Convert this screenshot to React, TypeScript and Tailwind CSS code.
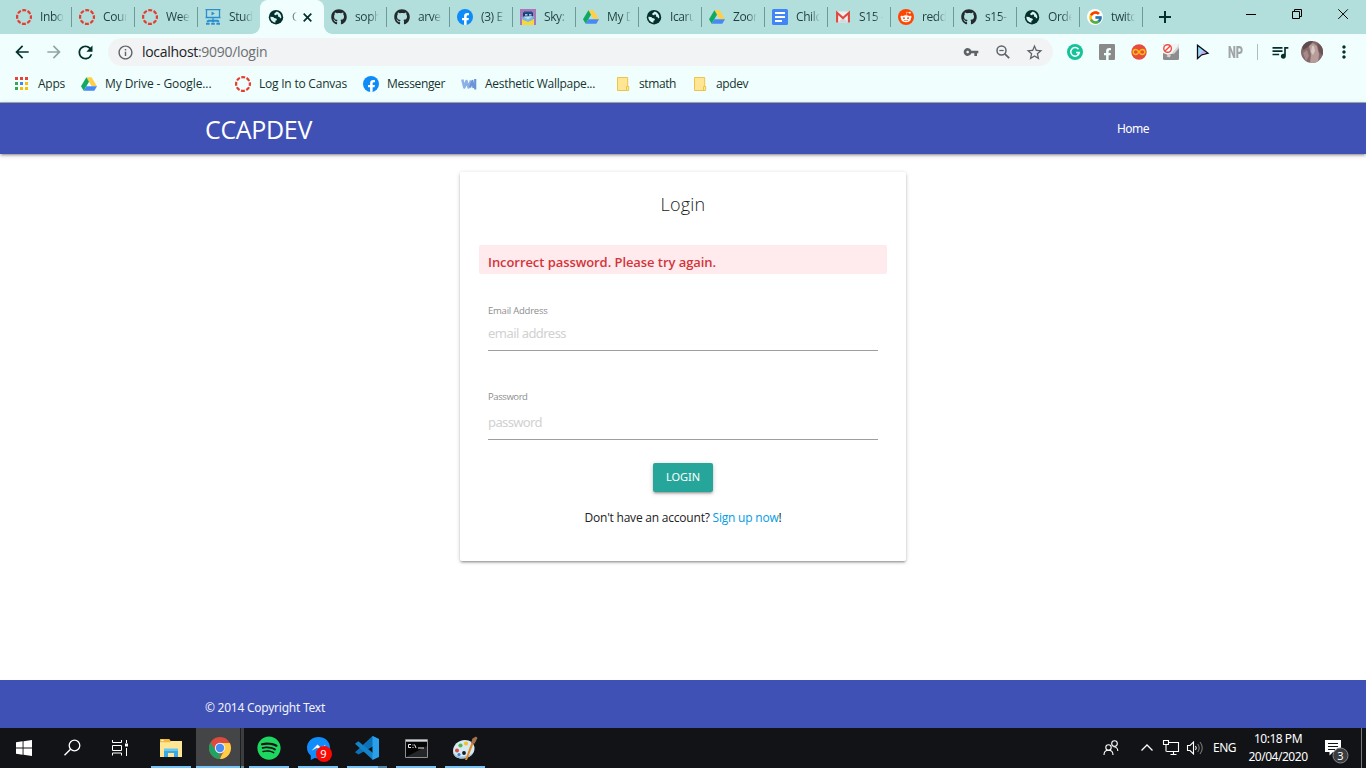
import React from "react";
import { FaGithub, FaRedditAlien, FaFacebookF, FaSpotify } from "react-icons/fa";
import { FcGoogle } from "react-icons/fc";
import {
  MdArrowBack, MdArrowForward, MdRefresh, MdInfoOutline, MdVpnKey,
  MdStarBorder, MdQueueMusic, MdMoreVert,
} from "react-icons/md";

function CanvasIcon() {
  return (
    <svg width="16" height="16" viewBox="0 0 16 16" className="shrink-0">
      <circle cx="8" cy="8" r="6.9" fill="none" stroke="#e63b2e" strokeWidth="2.2" strokeDasharray="3.9 1.52" strokeDashoffset="1.95" />
    </svg>
  );
}

function DriveIcon() {
  return (
    <svg width="16" height="16" viewBox="0 0 16 16" className="shrink-0">
      <path d="M5.4 1.2h5.2L16 10.3h-5.3z" fill="#ffcf48" />
      <path d="M5.4 1.2 8 5.7 2.7 14.7 0 10.3z" fill="#11a861" />
      <path d="M5.4 10.3H16l-2.7 4.4H2.7z" fill="#4688f4" />
    </svg>
  );
}

function FacebookIcon() {
  return (
    <span className="flex h-4 w-4 shrink-0 items-end justify-center overflow-hidden rounded-full bg-[#0f8bf8]">
      <FaFacebookF size={13} color="#fff" className="-mb-px" />
    </span>
  );
}

function GlobeIcon() {
  return (
    <svg width="16" height="16" viewBox="0 0 16 16" className="shrink-0">
      <circle cx="8" cy="8.200" r="7.200" fill="#03302d" />
      <path d="M8.800 2.600 6.300 4.600l.2 1.500 1.700.2.600-1 1.300.6-.2 1.700 1.700.3.400 1.700 1.400-.8c0-2.700-1.500-5.200-4.600-6.200z" fill="#d9f3f1" />
      <path d="M2.300 7.700c0 3 2 5.500 5 6l.2-1.900 1.500-.9-.7-1.500-2.100-.3-.9-1.200z" fill="#d9f3f1" />
    </svg>
  );
}

function StudIcon() {
  return (
    <svg width="16" height="16" viewBox="0 0 16 16" fill="none" stroke="#2a8fd0" className="shrink-0">
      <path d="M1.500 0v8.500M14.500 0v8.500M.5.7h15M.5 8.500h15M8 8.500v3" strokeWidth="1.300" />
      <path d="M6.500 2.500v4l3.400-2z" fill="#2a8fd0" stroke="none" />
      <path d="M3 11.700h10M1 14.700h3.600M6.200 14.700h3.600M11.400 14.700H15" strokeWidth="2" />
      <path d="M1.800 12.300h2M7 12.300h2M12.200 12.300h2" strokeWidth="2" />
    </svg>
  );
}

function SkyIcon() {
  return (
    <svg width="16" height="16" viewBox="0 0 16 16" className="shrink-0">
      <path fill="#a878ba" d="M0 0h16v16H0z" />
      <path fill="#f9d835" d="M2 10h12v6H2z" />
      <path fill="#123f78" d="M3 3.500h10V8H3z" />
      <path fill="#1f4f88" d="M4 2.500h8v2H4z" />
      <path fill="#dcecf5" d="M5 5.200h2.500v1.200H5zM9 5.200h2.500v1.200H9z" />
      <path fill="#7db9df" d="m1 8 7 1 6-2-1 4-5 2-5-2z" />
      <path fill="#b5dcef" d="m3 7.500 5 3 5-3.500z" />
    </svg>
  );
}

function DocsIcon() {
  return (
    <svg width="16" height="16" viewBox="0 0 16 16" className="shrink-0">
      <rect width="16" height="16" rx="1.500" fill="#4285f4" />
      <path d="M3 4h10M3 8h10M3 12h7" stroke="#fff" strokeWidth="1.900" />
    </svg>
  );
}

function GmailIcon() {
  return (
    <svg width="16" height="16" viewBox="0 0 16 16" className="shrink-0">
      <path fill="#eee" d="M1 2.500h14v11H1z" />
      <path fill="#d8d8d8" d="m3 13.500 5-5 5 5z" />
      <path d="M2.100 13.500V3.800L8 9l5.900-5.200v9.700" fill="none" stroke="#dd4b3e" strokeWidth="2.100" />
    </svg>
  );
}

function RedditIcon() {
  return (
    <span className="flex h-4 w-4 shrink-0 items-center justify-center rounded-full bg-[#ff4500]">
      <FaRedditAlien size={12} color="#fff" />
    </span>
  );
}

function GoogleIcon() {
  return (
    <span className="flex h-4 w-4 shrink-0 items-center justify-center rounded-full bg-white">
      <FcGoogle size={15} />
    </span>
  );
}

function FolderIcon() {
  return (
    <svg width="16" height="16" viewBox="0 0 16 16" className="shrink-0">
      <path d="M2.500 1.500h10.200v9h1v4H2.500z" fill="#ffe694" stroke="#ecc448" />
      <path d="M11.500 14.500v-4h2" fill="none" stroke="#ecc448" />
    </svg>
  );
}

function AppsIcon() {
  const colors = ["#ea4335", "#ea4335", "#ea4335", "#34a853", "#4285f4", "#fbbc05", "#34a853", "#fbbc05", "#fbbc05"];
  return (
    <svg width="14" height="14" viewBox="0 0 14 14" className="shrink-0" shapeRendering="crispEdges">
      {colors.map((c, i) => (
        <rect key={i} x={(i % 3) * 5} y={Math.floor(i / 3) * 5} width="3" height="3" fill={c} />
      ))}
    </svg>
  );
}

function WallpaperIcon() {
  return (
    <svg width="16" height="16" viewBox="0 0 16 16" className="shrink-0" fill="none" strokeWidth="2.500" strokeLinejoin="round">
      <path d="m1.300 3.500 2 8L5.500 5l2 6.500L10 4.500" stroke="#8db0e6" />
      <path d="m9 11.500 2.500-6.500 1 7M14.200 3v10.500" stroke="#6b93d8" strokeWidth="2.200" />
    </svg>
  );
}

const github = <FaGithub size={16} color="#24292e" className="shrink-0" />;

const tabsBefore = [
  { icon: <CanvasIcon />, text: "Inbo" },
  { icon: <CanvasIcon />, text: "Cour" },
  { icon: <CanvasIcon />, text: "Wee" },
  { icon: <StudIcon />, text: "Stud" },
];

const tabsAfter = [
  { icon: github, text: "soph" },
  { icon: github, text: "arve" },
  { icon: <FacebookIcon />, text: "(3) E" },
  { icon: <SkyIcon />, text: "Sky:" },
  { icon: <DriveIcon />, text: "My D" },
  { icon: <GlobeIcon />, text: "Icaru" },
  { icon: <DriveIcon />, text: "Zoor" },
  { icon: <DocsIcon />, text: "Chilc" },
  { icon: <GmailIcon />, text: "S15 -" },
  { icon: <RedditIcon />, text: "redd" },
  { icon: github, text: "s15-" },
  { icon: <GlobeIcon />, text: "Orde" },
  { icon: <GoogleIcon />, text: "twitc" },
];

function Tab({ icon, text, line = true }: { icon: React.ReactNode; text: string; line?: boolean }) {
  return (
    <div className="flex h-[34px] w-[63px] shrink-0 items-center">
      <div className="flex w-[62px] items-center pl-[7px]">
        <span className="flex w-4 shrink-0">{icon}</span>
        <span className="ml-2 w-[24px] overflow-hidden whitespace-nowrap text-[12px] leading-[18px] tracking-[-0.4px] text-[#1f3f3d] [mask-image:linear-gradient(to_right,black_60%,transparent)]">
          {text}
        </span>
      </div>
      <div className={line ? "h-5 w-px bg-[#6d9a97]" : "h-5 w-px"} />
    </div>
  );
}

function TabStrip() {
  return (
    <div className="flex h-[34px] bg-[#b2dfdc]">
      <div className="flex w-[252px] pl-[9px]">
        {tabsBefore.map((t, i) => (
          <Tab key={i} {...t} line={i < 3} />
        ))}
      </div>
      <div className="flex w-[80px] shrink-0">
        <div className="h-2 w-2 self-end bg-[radial-gradient(circle_at_0_0,#b2dfdc_7.500px,#f0fffe_8px)]" />
        <div className="flex w-[64px] items-center rounded-t-lg bg-[#f0fffe] pl-2">
          <span className="flex w-4 shrink-0"><GlobeIcon /></span>
          <span className="ml-2 w-[5px] overflow-hidden text-[12px] text-[#2b4a48] [mask-image:linear-gradient(to_right,black,transparent)]">C</span>
          <svg width="9" height="9" viewBox="0 0 9 9" className="ml-[6px]" stroke="#03302d" strokeWidth="1.700">
            <path d="m.7.7 7.600 7.600M8.300.7.7 8.300" />
          </svg>
        </div>
        <div className="h-2 w-2 self-end bg-[radial-gradient(circle_at_100%_0,#b2dfdc_7.500px,#f0fffe_8px)]" />
      </div>
      <div className="-ml-2 flex">
        {tabsAfter.map((t, i) => (
          <Tab key={i} {...t} />
        ))}
      </div>
      <svg width="12" height="12" viewBox="0 0 12 12" className="mt-[11px] ml-4" stroke="#03302d" strokeWidth="2">
        <path d="M6 0v12M0 6h12" />
      </svg>
      <svg width="126" height="34" viewBox="0 0 126 34" fill="none" stroke="#000" className="ml-auto shrink-0">
        <path d="M6 14.500h10M52.500 11.500h7v7h-7zM54.500 11.500v-2h7v7h-2" />
        <path d="m98.300 9.300 9.600 9.600M107.900 9.300l-9.600 9.600" />
      </svg>
    </div>
  );
}

function Extensions() {
  return (
    <div className="flex items-center">
      <svg width="16" height="16" viewBox="0 0 16 16">
        <circle cx="8" cy="8" r="8" fill="#15c39a" />
        <path d="M11.500 5.300A4.300 4.300 0 1 0 12.300 8.600H9" fill="none" stroke="#fff" strokeWidth="1.500" />
        <path d="M11.200 7.900v3.400" stroke="#fff" strokeWidth="1.400" />
      </svg>
      <span className="ml-4 flex h-4 w-4 items-end justify-end overflow-hidden rounded-[1px] bg-[#8a8a8a] pr-px">
        <FaFacebookF size={13} color="#f0fffe" className="-mb-px" />
      </span>
      <svg width="16" height="16" viewBox="0 0 16 16" className="ml-4">
        <circle cx="8" cy="8" r="7.700" fill="#e94b3c" />
        <path d="M8 8C6.500 5.900 5.600 5.500 4.700 5.500a2.500 2.500 0 0 0 0 5C5.600 10.500 6.500 10.100 8 8s2.400-2.500 3.300-2.500a2.500 2.500 0 0 1 0 5C10.400 10.500 9.500 10.100 8 8z" fill="none" stroke="#fbbf14" strokeWidth="1.500" />
      </svg>
      <svg width="16" height="16" viewBox="0 0 16 16" className="ml-4">
        <rect width="16" height="16" rx="1.500" fill="#8d8d8d" />
        <path d="M0 1.500V9l5 2 5-1.500 6-6.500V1L15 0H1z" fill="#f3f3f3" />
        <path d="m3.500 12.500 2-2.500 2.500 1.500-1.500 2zM9 9l7-8v3l-5 6z" fill="#d5d5d5" />
        <circle cx="4.600" cy="4.500" r="3.800" fill="#fff" stroke="#ee4b42" strokeWidth="1.400" />
        <path d="m2 7 5.200-5" stroke="#ee4b42" strokeWidth="1.400" />
      </svg>
      <svg width="16" height="16" viewBox="0 0 16 16" className="ml-4">
        <path d="M2.500 1.200v13.300l4.200-3.700 6.300-1.600z" fill="#9adcf5" stroke="#0d0d18" strokeWidth="1.300" />
        <path d="m3.300 13 3-2.800 4.700-1.300-3.200-2z" fill="#d39cf0" />
      </svg>
      <span className="ml-[15px] flex w-[18px] justify-center font-['Roboto'] text-[17px] leading-4 font-black text-[#a0a5a5]">
        <span className="scale-x-[0.66]">NP</span>
      </span>
      <span className="ml-[13px] h-4 w-px bg-[#a9c0bf]" />
      <MdQueueMusic size={20} color="#03302d" className="ml-3" />
      <svg width="22" height="22" viewBox="0 0 22 22" className="ml-[11px]">
        <clipPath id="avatar"><circle cx="11" cy="11" r="11" /></clipPath>
        <g clipPath="url(#avatar)">
          <path fill="#85696b" d="M0 0h22v22H0z" />
          <path fill="#5f4a4d" d="M0 0h12L7 6 2 9z" />
          <path fill="#b89c99" d="m8 5 4-3 4 3 2 8-1 9H9l1-8z" />
          <path fill="#d8c8c3" d="m11 5 2 0 1 5-2 4-2-3z" />
          <path fill="#a58a89" d="m2 12 4-3 2 6-3 5z" />
          <path fill="#6d5256" d="m16 2 6 4v9l-4-4z" />
        </g>
      </svg>
      <MdMoreVert size={20} color="#03302d" className="ml-[11px]" />
    </div>
  );
}

function Toolbar() {
  return (
    <div className="flex h-9 items-center bg-[#f0fffe]">
      <MdArrowBack size={20} color="#03302d" className="ml-3" />
      <MdArrowForward size={20} color="#8fa6a5" className="ml-3" />
      <MdRefresh size={21} color="#03302d" className="ml-[11px]" />
      <div className="ml-3 flex h-7 w-[945px] items-center rounded-full bg-[#f1f3f4]">
        <MdInfoOutline size={17} color="#5f6368" className="ml-[9px]" />
        <span className="ml-2 text-[14px] leading-5 tracking-[-0.3px] text-[#6b6f73]">
          <span className="text-[#202124]">localhost</span>:9090/login
        </span>
        <MdVpnKey size={16} color="#5f6368" className="ml-auto" />
        <svg width="16" height="16" viewBox="0 0 16 16" className="ml-4" fill="none" stroke="#5f6368">
          <circle cx="6.500" cy="6.500" r="4.500" strokeWidth="1.500" />
          <path d="m9.800 9.800 4.400 4.400" strokeWidth="1.800" />
          <path d="M4.300 6.500h4.400" strokeWidth="1.200" />
        </svg>
        <MdStarBorder size={19} color="#5f6368" className="mr-[9px] ml-[14px]" />
      </div>
      <div className="ml-[14px]"><Extensions /></div>
    </div>
  );
}

function BookmarksBar() {
  return (
    <div className="flex h-[33px] items-center border-b border-[#a5aeae] bg-[#f0fffe] pb-1 pl-[15px] text-[12px] leading-4 whitespace-nowrap text-[#173331]">
      <div className="flex w-[66px] items-center gap-[9px] tracking-[-0.25px]"><AppsIcon />Apps</div>
      <div className="flex w-[154px] items-center gap-2 tracking-[-0.09px]"><DriveIcon />My Drive - Google...</div>
      <div className="flex w-[128px] items-center gap-2 tracking-[-0.22px]"><CanvasIcon />Log In to Canvas</div>
      <div className="flex w-[98px] items-center gap-2 tracking-[-0.36px]"><FacebookIcon />Messenger</div>
      <div className="flex w-[154px] items-center gap-2 tracking-[-0.28px]"><WallpaperIcon />Aesthetic Wallpape...</div>
      <div className="flex w-[77px] items-center gap-2 tracking-[-0.4px]"><FolderIcon />stmath</div>
      <div className="flex items-center gap-2 tracking-[-0.4px]"><FolderIcon />apdev</div>
    </div>
  );
}

function LoginCard() {
  return (
    <form className="flex h-[389px] w-[446px] flex-col rounded-[2px] bg-white px-[19px] pt-[20px] shadow-[0_2px_2px_0_rgba(0,0,0,0.14),0_3px_1px_-2px_rgba(0,0,0,0.12),0_1px_4px_0_rgba(0,0,0,0.2)]">
      <h1 className="text-center text-[18px] leading-6 font-light tracking-[0.2px] text-[#222]">Login</h1>
      <div className="mt-[29px] h-[29px] rounded-[2px] bg-[#ffebee] px-[9px] pt-[7px] text-[13px] leading-5 font-semibold tracking-[-0.066px] text-[#d3343a]">
        Incorrect password. Please try again.
      </div>
      <div className="flex flex-col px-[9px]">
        <label htmlFor="email" className="mt-[30px] text-[9.5px] leading-[14px] tracking-[-0.233px] text-[#8e8e8e]">Email Address</label>
        <input id="email" placeholder="email address" className="h-[33px] border-b border-[#9e9e9e] pb-[2px] font-['Noto_Sans',sans-serif] text-[13px] tracking-[-0.54px] outline-none placeholder:text-[#d1d1d1]" />
        <label htmlFor="password" className="mt-[39px] text-[9.5px] leading-[14px] tracking-[-0.416px] text-[#8e8e8e]">Password</label>
        <input id="password" placeholder="password" className="h-9 border-b border-[#9e9e9e] font-['Noto_Sans',sans-serif] text-[13px] tracking-[-0.62px] outline-none placeholder:text-[#d1d1d1]" />
      </div>
      <button type="button" className="mt-[23px] h-[29px] w-[60px] self-center rounded-[2px] bg-[#26a69a] font-['Noto_Sans',sans-serif] text-[11px] tracking-[-0.04px] text-white shadow-[0_2px_2px_0_rgba(0,0,0,0.14),0_3px_1px_-2px_rgba(0,0,0,0.12),0_1px_5px_0_rgba(0,0,0,0.2)]">
        LOGIN
      </button>
      <p className="mt-4 text-center text-[12px] leading-5 tracking-[-0.214px] text-[#212121]">
        Don't have an account? <a className="text-[#039be5]">Sign up now</a>!
      </p>
    </form>
  );
}

function Slot({ children }: { children: React.ReactNode }) {
  return (
    <div className="flex h-10 w-10 flex-col items-center">
      <div className="flex h-[38px] items-center justify-center pt-[2px]">{children}</div>
      <div className="h-[2px] w-full bg-[#76c3f7]" />
    </div>
  );
}

function MessengerIcon() {
  return (
    <div className="relative">
      <svg width="25" height="25" viewBox="0 0 25 25">
        <path d="M12.500 1C6 1 1 5.600 1 11.800c0 3.400 1.500 6 3.800 7.900V24l3.900-2.100c1.200.3 2.500.5 3.800.5 6.500 0 11.500-4.500 11.500-10.600S19 1 12.500 1z" fill="#118cfb" />
        <path d="m5.500 14.800 6-6.400 3.200 3.100 5.500-3.100-6.100 6.400-3.100-3.100z" fill="#fff" />
      </svg>
      <span className="absolute top-[10px] left-[10px] flex h-4 w-4 items-center justify-center rounded-full bg-[#fa0a05] text-[11px] leading-4 text-white">9</span>
    </div>
  );
}

function Taskbar() {
  return (
    <div className="flex h-10 bg-[#111316] font-['Noto_Sans',sans-serif] text-white">
      <svg width="144" height="40" viewBox="0 0 144 40" fill="none" stroke="#fff" className="shrink-0">
        <path d="M16 14.300 22.600 13.300v6.300H16zM23.500 13.200 32 12v7.600h-8.500zM16 20.500h6.600v6.300L16 25.800zM23.500 20.500H32V28l-8.500-1.200z" fill="#fff" stroke="none" />
        <circle cx="74.500" cy="17.500" r="5.300" strokeWidth="1.300" />
        <path d="m70.500 21.300-6 6" strokeWidth="1.400" />
        <path d="M112.500 12v2.500h9V12M112.500 27.500V25h9v2.500M112.500 17.500h9v5h-9zM126.500 12v3M126.500 20v8" />
        <path d="M125 15.500h3v3h-3z" fill="#fff" stroke="none" />
      </svg>
      <div className="flex gap-[9px] pl-[7px]">
        <Slot>
          <svg width="22" height="20" viewBox="0 0 22 20">
            <path d="M0 2.200Q0 1 1 1h8l1.500 2H22v16H0z" fill="#ffe694" />
            <path d="M0 2.200Q0 1 1 1h8l1.500 2v1.200H0z" fill="#f0bb3c" />
            <path d="M1.500 1.800h2v1.200h-2z" fill="#fff" />
            <path d="M4 19v-8h14v8h-4v-4H8v4z" fill="#39a9e5" />
            <path d="M4 10.500h14V13H4z" fill="#62c8f1" />
          </svg>
        </Slot>
        <div className="-mx-1 flex h-10 w-12">
          <div className="flex h-10 w-11 flex-col bg-[#434547]">
            <div className="flex h-[38px] items-center justify-center pt-[2px] pl-[3px]">
              <svg width="22" height="22" viewBox="0 0 22 22">
                <circle cx="11" cy="11" r="11" fill="#dd4b3e" />
                <path d="M1.500 5.500 6.500 13.500 11 16 8.300 21.700A11 11 0 0 1 1.500 5.500z" fill="#1da362" />
                <path d="M11 6h9.800A11 11 0 0 1 10.600 22l4.800-8.400z" fill="#ffcd46" />
                <path d="M8.300 21.700 13 14l-2 8z" fill="#1da362" />
                <circle cx="11" cy="11" r="5.200" fill="#f1f1f1" />
                <circle cx="11" cy="11" r="4.200" fill="#4a8bf5" />
              </svg>
            </div>
            <div className="h-[2px] bg-[#76c3f7]" />
          </div>
          <div className="flex w-1 flex-col justify-end border-l border-[#1c1e20] bg-[#3b3d3f]"><div className="h-[2px] bg-[#5795ac]" /></div>
        </div>
        <Slot><FaSpotify size={24} color="#1ed760" /></Slot>
        <Slot><MessengerIcon /></Slot>
        <div className="flex h-10 w-10 flex-col items-center">
          <div className="flex h-[38px] items-center justify-center pt-[2px]">
            <svg width="24" height="24" viewBox="0 0 24 24">
              <path d="M17.500 0 24 3v4L3.500 18.500 0 16.300z" fill="#0b72b8" />
              <path d="m0 7.700 3.300-2.400L18 17v7z" fill="#1683c9" />
              <path d="M17.500 0 24 3v18l-6.500 3z" fill="#2ba0ea" />
            </svg>
          </div>
          <div className="flex h-[2px] w-full"><div className="w-[31px] bg-[#76c3f7]" /><div className="w-[9px] bg-[#5088ab]" /></div>
        </div>
        <Slot>
          <svg width="23" height="19" viewBox="0 0 23 19">
            <path d="M.5.500h22v18H.5z" fill="#050505" stroke="#8d9194" />
            <path d="M1 1h21v1.700H1z" fill="#d6d9db" />
            <path d="M1 18 22 7v11z" fill="#242628" />
            <path d="M6 5.500H3.500v3H6M8 5.500v1M8 8v1M9.500 5.500l1.500 3.500M13 9h6" stroke="#eee" fill="none" />
          </svg>
        </Slot>
        <Slot>
          <svg width="26" height="25" viewBox="0 0 26 25">
            <path d="M13 4C6 4 1 9 1 15c0 5 4 7.500 9 7.500 8 0 13-5 12.500-11C22 7 18 4 13 4z" fill="#d7e9f3" />
            <path d="M1 15c0 5 4 7.500 9 7.500 5.500 0 9.600-2.400 11.500-6-4 3-7 4-11 4s-8-1-9.500-5.500z" fill="#9fc3d8" />
            <circle cx="12" cy="17" r="1.900" fill="#171b20" />
            <circle cx="5" cy="14.500" r="2" fill="#dd4b3e" />
            <circle cx="8.500" cy="9.500" r="2.100" fill="#53b848" />
            <circle cx="14" cy="7.500" r="2.100" fill="#f5bf2b" />
            <circle cx="7" cy="18.500" r="1.600" fill="#3b83d2" />
            <path d="m13 24 6.500-17.500 2 1L15 24z" fill="#e08a30" />
            <path d="m19 7 1.500-4.500L24 .5l1.500 1.500-3 5.800z" fill="#a4714a" />
          </svg>
        </Slot>
      </div>
      <svg width="110" height="40" viewBox="1098 0 110 40" fill="none" stroke="#fff" strokeWidth="1.100" className="ml-auto shrink-0">
        <circle cx="1108.500" cy="19.500" r="2.700" /><path d="M1104 27c0-3 2-4.700 4.500-4.700s4.500 1.700 4.500 4.700" />
        <circle cx="1114.500" cy="15.500" r="2.800" /><path d="M1113.500 18.700c2.300 0 4.300 1.800 4.300 4.300" />
        <path d="m1141.500 22.500 5.500-5.500 5.500 5.500" strokeWidth="1.300" />
        <path d="M1168.500 14.500h10v9h-12M1170.500 26.500h6M1173.500 23.500v3M1163.500 12.500h5v4h-5zM1166 16.500v7" />
        <path d="M1187.500 17.500h2.500l3.500-3.500v12l-3.500-3.500h-2.500z" /><path d="M1195.500 18q1.500 2 0 4" />
        <path d="M1197.700 16q3 4 0 8M1200 14q4.500 6 0 12" stroke="#777" />
      </svg>
      <span className="ml-[5px] w-[24px] pt-[11px] text-[12px] leading-[18px] tracking-[-0.51px]">ENG</span>
      <div className="ml-[11px] w-[60px] pt-[2px] text-center text-[12px] leading-[18px] tracking-[-0.48px]">
        <div>10:18 PM</div>
        <div>20/04/2020</div>
      </div>
      <svg width="50" height="40" viewBox="1316 0 50 40" className="ml-2 shrink-0">
        <path d="M1325 12h16v12h-8l-3.500 3.500V24h-4.500z" fill="#fff" />
        <path d="M1328 15.500h10M1328 18.500h10M1328 21.500h7" stroke="#111316" />
        <circle cx="1340.500" cy="27.500" r="7.500" fill="#3a3c3f" stroke="#85878a" />
        <text x="1340.500" y="31.500" textAnchor="middle" fontSize="11" fill="#fff">3</text>
        <path d="M1361.500 0v40" stroke="#777" />
      </svg>
    </div>
  );
}

export default function App() {
  return (
    <div className="flex h-[768px] w-[1366px] flex-col overflow-hidden bg-white font-['Open_Sans','Noto_Sans',sans-serif]">
      <TabStrip />
      <Toolbar />
      <BookmarksBar />
      <nav className="flex h-[51px] shrink-0 items-center justify-between bg-[#3f51b5] pr-[217px] pl-[205px] text-white shadow-[0_2px_2px_0_rgba(0,0,0,0.14),0_3px_1px_-2px_rgba(0,0,0,0.12),0_1px_5px_0_rgba(0,0,0,0.2)]">
        <a className="pt-px text-[25px] leading-[38px] tracking-[-0.326px]">CCAPDEV</a>
        <a className="font-['Noto_Sans',sans-serif] text-[12px] tracking-[-0.53px]">Home</a>
      </nav>
      <main className="flex flex-1 justify-center pt-[18px]">
        <LoginCard />
      </main>
      <footer className="h-12 shrink-0 bg-[#3f51b5] pt-[18px] pl-[205px] font-['Noto_Sans',sans-serif] text-[12px] leading-[19px] tracking-[-0.244px] text-[#f1f2fa]">
        © 2014 Copyright Text
      </footer>
      <Taskbar />
    </div>
  );
}
